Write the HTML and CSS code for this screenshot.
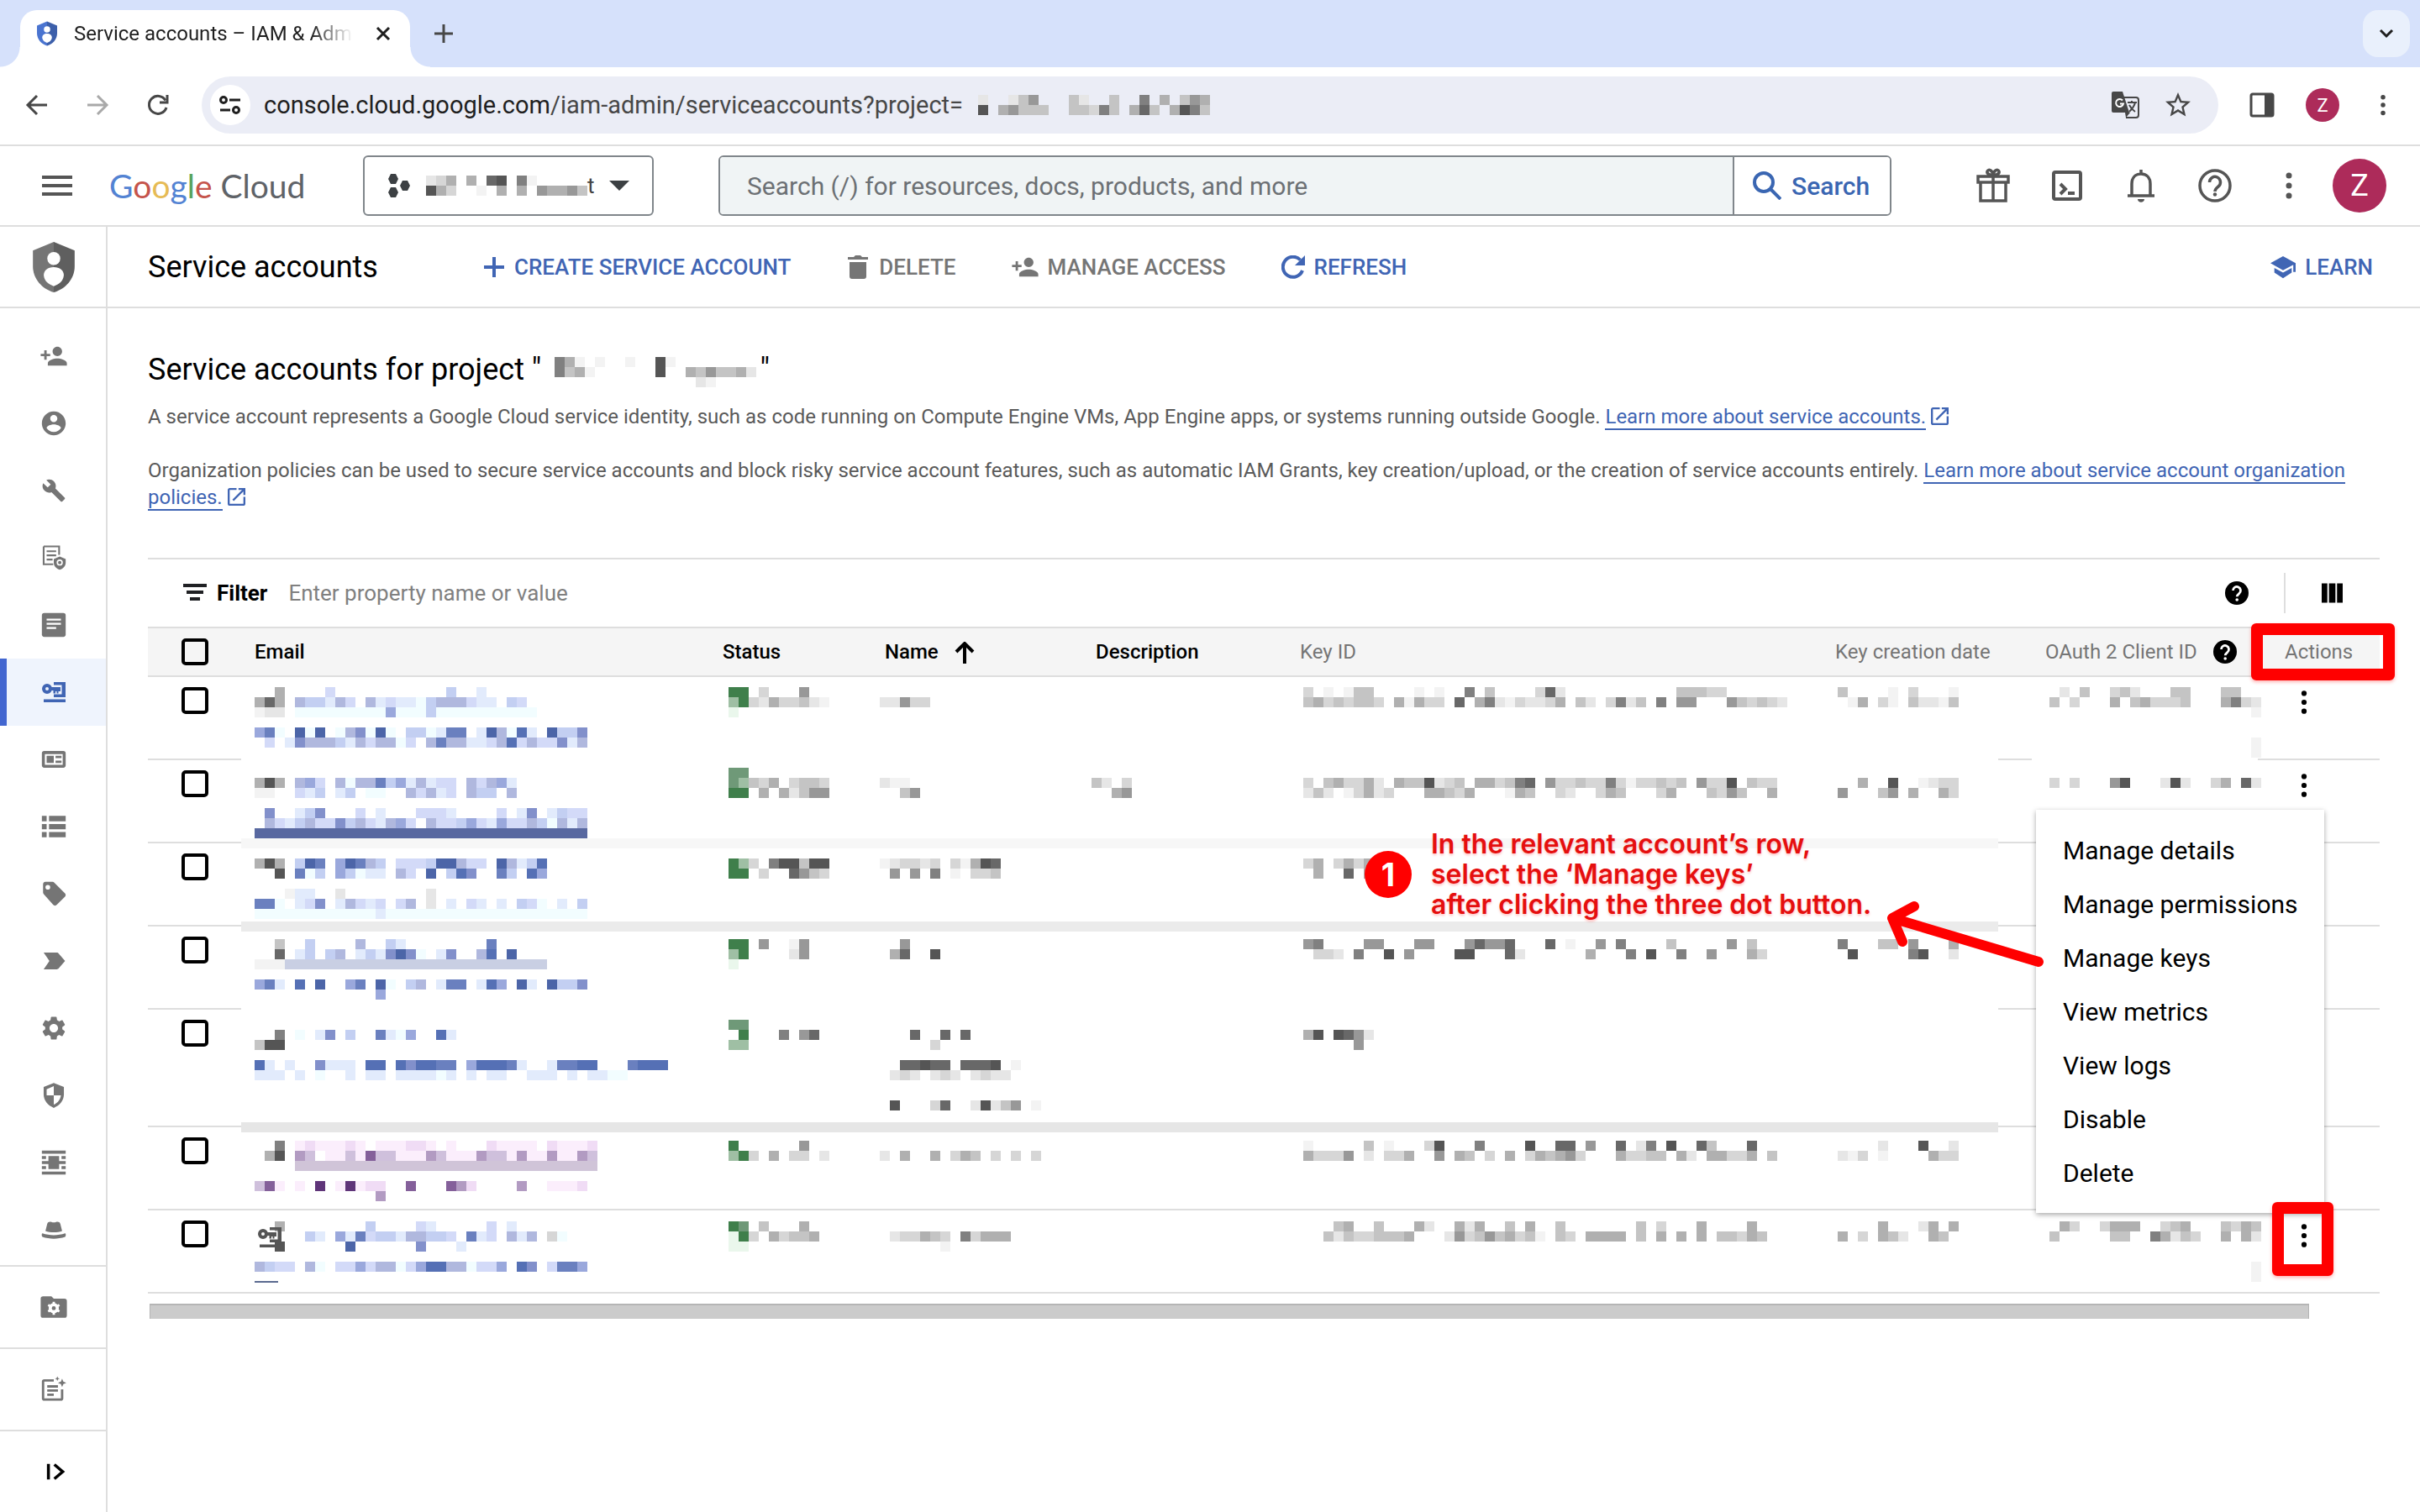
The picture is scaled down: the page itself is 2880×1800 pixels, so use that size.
FILE: index.html
```html
<!DOCTYPE html>
<html lang="en">
<head>
  <meta charset="utf-8">
  <title>Service accounts – IAM &amp; Admin</title>
  <link rel="stylesheet" href="styles.css">
</head>
<body>
  <svg class="sprite" aria-hidden="true">
    <symbol id="dots" viewBox="0 0 24 24"><circle cx="12" cy="4.500" r="2.200"/><circle cx="12" cy="12" r="2.200"/><circle cx="12" cy="19.500" r="2.200"/></symbol>
    <symbol id="person-add" viewBox="0 0 24 24"><path d="M15 12c2.210 0 4-1.790 4-4s-1.790-4-4-4-4 1.790-4 4 1.790 4 4 4zm-9-2V7H4v3H1v2h3v3h2v-3h3v-2H6zm9 4c-2.670 0-8 1.340-8 4v2h16v-2c0-2.660-5.330-4-8-4z"/></symbol>
    <symbol id="help" viewBox="0 0 28 28"><circle cx="14" cy="14" r="14"/><path d="M9.500 11a4.500 4.500 0 1 1 7.300 3.500c-1.800 1.400-2.600 2-2.600 3.800" fill="none" stroke="#fff" stroke-width="2.800"/><circle cx="14.200" cy="22" r="1.800" fill="#fff"/></symbol>
    <symbol id="open" viewBox="3 3 18 18"><path d="M19 19H5V5h7V3H5c-1.110 0-2 .9-2 2v14c0 1.100.890 2 2 2h14c1.100 0 2-.9 2-2v-7h-2v7zM14 3v2h3.590l-9.830 9.830 1.410 1.410L19 6.410V10h2V3h-7z"/></symbol>
    <symbol id="key-account" viewBox="0 0 28 24"><path d="M14 0h14v18H14v-3.500h9.500v-11H14z"/><circle cx="6" cy="8" r="4" fill="none" stroke="currentColor" stroke-width="4"/><path d="M9 6h13v5h-2.500v2.500h-2V11H16v2.500h-2.500V10H9zM2 20.500h26V24H2z"/></symbol>
    <symbol id="shield-user" viewBox="0 0 48 58"><path d="M24 0 0 10v18c0 14 10 26 24 30 14-4 24-16 24-30V10z"/><path d="M24 0v58c14-4 24-16 24-30V10z" fill="#000" opacity=".18"/><circle cx="24" cy="19" r="7.500" fill="#fff"/><path d="M24 29c-7 0-11.500 4-11.500 9 0 7 6 11 11.500 13 5.500-2 11.500-6 11.500-13 0-5-4.500-9-11.500-9z" fill="#fff"/></symbol>
  </svg>

  <div class="tab-strip">
    <div class="tab">
      <svg class="favicon"><use href="#shield-user"/></svg>
      <span class="tab-title">Service accounts – IAM &amp; Admin</span>
      <button class="plain" aria-label="Close tab"><svg width="20" height="20" viewBox="0 0 20 20"><path d="M3 3l14 14M17 3L3 17" stroke="#1f1f1f" stroke-width="3"/></svg></button>
    </div>
    <button class="plain new-tab" aria-label="New tab"><svg width="22" height="22" viewBox="0 0 22 22"><path d="M11 0v22M0 11h22" stroke="#474747" stroke-width="3"/></svg></button>
    <button class="plain tab-search" aria-label="Search tabs"><svg width="18" height="12" viewBox="0 0 18 12"><path d="M2 2l7 7 7-7" fill="none" stroke="#1f1f1f" stroke-width="3"/></svg></button>
  </div>

  <div class="toolbar">
    <div class="nav-buttons">
      <button class="plain" aria-label="Back"><svg width="28" height="28" viewBox="0 0 28 28" fill="none" stroke="#474747" stroke-width="3"><path d="M26 14H4M14 3L3 14l11 11"/></svg></button>
      <button class="plain" aria-label="Forward"><svg width="28" height="28" viewBox="0 0 28 28" fill="none" stroke="#a9a9a9" stroke-width="3"><path d="M2 14h22M14 3l11 11-11 11"/></svg></button>
      <button class="plain" aria-label="Reload"><svg width="28" height="28" viewBox="0 0 28 28" fill="none" stroke="#474747" stroke-width="3"><path d="M24 17a10.500 10.500 0 1 1-1-8.500"/><path d="M25 2v9h-9"/></svg></button>
    </div>
    <div class="address">
      <span class="site-info"><svg width="28" height="28" viewBox="0 0 28 28" fill="none" stroke="#1f1f1f" stroke-width="3"><circle cx="6" cy="8" r="3.500"/><path d="M13 8h13M2 20h12"/><circle cx="21" cy="20" r="3.500"/></svg></span>
      <span class="url">console.cloud.google.com<span>/iam-admin/serviceaccounts?project=</span></span>
      <svg class="px" data-px="2..246...42..4..7.5.465/9.56444..44374.584.5974"></svg>
      <svg class="translate" width="34" height="34" viewBox="0 0 34 34"><path d="M15 8h15a3 3 0 0 1 3 3v18a3 3 0 0 1-3 3H18" fill="none" stroke="#474747" stroke-width="2"/><path d="M3 1h11l8 25H3a2 2 0 0 1-2-2V3a2 2 0 0 1 2-2z" fill="#474747"/><path d="M17 26h6l-5 6z" fill="#474747"/><path d="M14 11.500a4.500 4.500 0 1 0 1 4h-4" fill="none" stroke="#fff" stroke-width="2"/><path d="M20 14h11M25 12v2M29 14c-1 5-4 8-7 11M22 17c2 4 4 6 7 8" fill="none" stroke="#474747" stroke-width="2"/></svg>
      <svg width="36" height="36" viewBox="0 0 24 24" fill="#474747"><path d="M22 9.240l-7.190-.620L12 2 9.190 8.630 2 9.240l5.460 4.730L5.820 21 12 17.270 18.180 21l-1.630-7.030L22 9.240zM12 15.400l-3.760 2.270 1-4.280-3.320-2.880 4.380-.380L12 6.100l1.710 4.040 4.380.380-3.320 2.880 1 4.280L12 15.400z"/></svg>
    </div>
    <div class="browser-actions">
      <svg width="30" height="30" viewBox="0 0 30 30"><rect x="2" y="2" width="26" height="26" rx="2" fill="none" stroke="#474747" stroke-width="3"/><path d="M18 1h9v28h-9z" fill="#474747"/></svg>
      <span class="avatar small">Z</span>
      <button class="plain" aria-label="Chrome menu"><svg width="30" height="30" fill="#474747"><use href="#dots"/></svg></button>
    </div>
  </div>

  <header class="console-bar">
    <button class="plain menu-btn" aria-label="Main menu"><svg width="36" height="24" viewBox="0 0 36 24" fill="#555"><path d="M0 0h36v4H0zM0 10h36v4H0zM0 20h36v4H0z"/></svg></button>
    <a class="logo" href="#"><span class="g-blue">G</span><span class="g-red">o</span><span class="g-yellow">o</span><span class="g-blue">g</span><span class="g-green">l</span><span class="g-red">e</span> Cloud</a>
    <button class="project">
      <svg width="28" height="28" viewBox="0 0 28 28" fill="#3c4043"><path d="M4 0h6l3 6-3 6H4L1 6zM4 16h6l3 6-3 6H4l-3-6zM18 8h6l3 6-3 6h-6l-3-6z"/></svg>
      <svg class="px" data-px="235.5.89.71/953..1.5.5.65564"></svg>
      <span class="project-tail">t</span>
      <svg width="24" height="12" viewBox="0 0 24 12" fill="#3c4043"><path d="M0 0h24L12 12z"/></svg>
    </button>
    <form class="search">
      <input type="text" aria-label="Search" placeholder="Search (/) for resources, docs, products, and more">
      <button type="button"><svg width="34" height="34" viewBox="0 0 34 34" fill="none" stroke="#3a66b2" stroke-width="4"><circle cx="13" cy="13" r="11"/><path d="M21 21l12 12"/></svg>Search</button>
    </form>
    <div class="console-icons">
      <button class="plain" aria-label="Free trial"><svg width="42" height="42" viewBox="0 0 42 42" fill="none" stroke="#555" stroke-width="3.500"><path d="M3 10h36v7H3zM6 17h30v22H6zM21 10v29M21 9c-4-1-8-2-7-5s6-2 7 4c1-6 6-7 7-4s-3 4-7 5"/></svg></button>
      <button class="plain" aria-label="Cloud Shell"><svg width="42" height="42" viewBox="0 0 42 42" fill="none" stroke="#555" stroke-width="4"><rect x="5" y="5" width="32" height="32" rx="2"/><path d="M13 19l6 6-6 6M22 30h8"/></svg></button>
      <button class="plain" aria-label="Notifications"><svg width="42" height="42" viewBox="0 0 42 42" fill="none" stroke="#555" stroke-width="3.500"><path d="M5 33h32M10 33V19c0-7 4-12 11-12s11 5 11 12v14M21 2v5"/><path d="M17 37h8c0 5-8 5-8 0z" fill="#555" stroke="none"/></svg></button>
      <button class="plain" aria-label="Help"><svg width="42" height="42" viewBox="0 0 42 42" fill="none" stroke="#555" stroke-width="3.500"><circle cx="21" cy="21" r="18"/><path d="M14.500 17a6.500 6.500 0 1 1 10.500 5c-2.500 2-4 3-4 6"/><circle cx="21" cy="31.500" r="2.200" fill="#555" stroke="none"/></svg></button>
      <button class="plain" aria-label="More"><svg width="42" height="42" viewBox="1 1 22 22" fill="#555"><use href="#dots" x="2" y="2" width="20" height="20"/></svg></button>
      <span class="avatar">Z</span>
    </div>
  </header>

  <div class="workspace">
    <nav class="rail">
      <a class="rail-head" href="#" aria-label="IAM"><svg width="50" height="60" fill="#757575"><use href="#shield-user"/></svg></a>
      <ul>
        <li><a href="#" aria-label="IAM"><svg><use href="#person-add"/></svg></a></li>
        <li><a href="#" aria-label="Identity"><svg viewBox="0 0 24 24"><path d="M12 2C6.480 2 2 6.480 2 12s4.480 10 10 10 10-4.480 10-10S17.520 2 12 2zm0 3c1.660 0 3 1.340 3 3s-1.340 3-3 3-3-1.340-3-3 1.340-3 3-3zm0 14.200c-2.500 0-4.710-1.280-6-3.220.030-1.990 4-3.080 6-3.080 1.990 0 5.970 1.090 6 3.080-1.290 1.940-3.500 3.220-6 3.220z"/></svg></a></li>
        <li><a href="#" aria-label="Troubleshooter"><svg viewBox="-2 -2 28 28"><path d="M22.700 19l-9.100-9.100c.9-2.300.4-5-1.500-6.900-2-2-5-2.400-7.400-1.300L9 6 6 9 1.600 4.700C.4 7.100.9 10.100 2.900 12.100c1.900 1.900 4.600 2.400 6.900 1.500l9.100 9.100c.4.4 1 .4 1.400 0l2.300-2.300c.5-.4.5-1.100.1-1.400z"/></svg></a></li>
        <li><a href="#" aria-label="Policy analyzer"><svg viewBox="0 0 24 24"><path d="M3.500 2.500h13v7M3.500 2.500v15h8M6 6.500h8M6 10h8M6 13.500h5" fill="none" stroke="currentColor" stroke-width="1.500"/><path d="M17 11l5 2v3c0 3-2 5-5 6-3-1-5-3-5-6v-3z"/><circle cx="17" cy="16" r="2" fill="none" stroke="#fff" stroke-width="1.200"/></svg></a></li>
        <li><a href="#" aria-label="Organization policies"><svg viewBox="0 0 24 24"><path d="M4 2h16a2 2 0 0 1 2 2v16a2 2 0 0 1-2 2H4a2 2 0 0 1-2-2V4a2 2 0 0 1 2-2z"/><path d="M6 7.500h12M6 11h12M6 14.500h8" stroke="#fff" stroke-width="1.600"/></svg></a></li>
        <li class="active"><a href="#" aria-label="Service accounts"><svg class="key"><use href="#key-account"/></svg></a></li>
        <li><a href="#" aria-label="Workload identity"><svg viewBox="0 0 24 24"><path d="M4 5h16a2 2 0 0 1 2 2v10a2 2 0 0 1-2 2H4a2 2 0 0 1-2-2V7a2 2 0 0 1 2-2zm.5 2.500v9h15v-9z" fill-rule="evenodd"/><path d="M6 9h6v6H6zM13.500 9h5v2h-5zM13.500 13h5v2h-5z"/></svg></a></li>
        <li><a href="#" aria-label="Federation"><svg viewBox="0 0 24 24"><path d="M2 3h4v4.500H2zM8 3h14v4.500H8zM2 9.800h4v4.500H2zM8 9.800h14v4.500H8zM2 16.500h4V21H2zM8 16.500h14V21H8z"/></svg></a></li>
        <li><a href="#" aria-label="Labels"><svg viewBox="0 0 24 24"><path d="M21.410 11.580l-9-9C12.050 2.220 11.550 2 11 2H5c-1.100 0-2 .9-2 2v7c0 .550.220 1.050.590 1.420l8 9c.360.360.860.580 1.410.580.550 0 1.050-.220 1.410-.590l7-7c.370-.360.590-.860.590-1.410 0-.550-.230-1.060-.590-1.420zM7 8.500a2 2 0 1 1 0-4 2 2 0 0 1 0 4z"/></svg></a></li>
        <li><a href="#" aria-label="Tags"><svg viewBox="0 0 24 24"><path d="M3.500 19h11c.670 0 1.270-.330 1.630-.840L21.500 12l-5.370-6.160c-.360-.510-.960-.840-1.630-.840h-11L8.340 12z"/></svg></a></li>
        <li><a href="#" aria-label="Settings"><svg viewBox="0 0 24 24"><path d="M19.140 12.940c.040-.3.060-.610.060-.940 0-.320-.020-.640-.070-.940l2.030-1.580c.180-.140.230-.410.120-.610l-1.920-3.320c-.120-.220-.370-.290-.590-.220l-2.390.960c-.5-.380-1.030-.7-1.620-.940l-.360-2.540c-.040-.240-.240-.410-.480-.410h-3.840c-.240 0-.430.170-.470.410l-.360 2.540c-.590.240-1.130.570-1.620.940l-2.390-.960c-.220-.080-.470 0-.590.220L2.740 8.870c-.120.210-.080.470.120.610l2.030 1.580c-.050.3-.090.630-.090.940s.020.640.070.940l-2.030 1.580c-.180.140-.230.410-.120.610l1.920 3.320c.120.220.370.290.590.220l2.390-.960c.5.380 1.030.7 1.620.940l.360 2.540c.050.240.240.410.480.410h3.840c.240 0 .440-.170.470-.410l.360-2.540c.590-.240 1.130-.560 1.620-.940l2.390.960c.220.080.470 0 .590-.220l1.920-3.320c.120-.220.070-.470-.120-.610l-2.010-1.580zM12 15.600c-1.980 0-3.600-1.620-3.600-3.600s1.620-3.600 3.600-3.600 3.600 1.620 3.600 3.600-1.620 3.600-3.600 3.600z"/></svg></a></li>
        <li><a href="#" aria-label="Privacy and security"><svg viewBox="0 0 24 24"><path d="M12 1.500L3.500 5v6c0 5.500 3.500 9.500 8.500 11.500 5-2 8.500-6 8.500-11.500V5z"/><path d="M6 6.800l6-2.500V12H6zM12 12h6c-.5 3.500-2.500 6.300-6 7.800z" fill="#fff"/></svg></a></li>
        <li><a href="#" aria-label="Identity-aware proxy"><svg viewBox="0 0 24 24"><path d="M2 2h20v2.500H2zM2 19.500h20V22H2zM7.500 6.500h9v11h-9zM2 6.500h3.500V9H2zM18.500 6.500H22V9h-3.500zM2 10.800h20v2.400H2zM2 15h3.500v2.500H2zM18.500 15H22v2.500h-3.500z"/></svg></a></li>
        <li><a href="#" aria-label="Roles"><svg viewBox="0 0 24 24"><path d="M5 13l1.500-6c.5-1.500 2-2 3.500-1.500s2.500.5 4 0 3 0 3.500 1.500L19 13c-4 1.500-10 1.500-14 0z"/><path d="M2.500 15c6 2 13 2 19 0 .8 0 .8 2.500 0 3-6 2-13 2-19 0-.8-.5-.8-3 0-3z"/></svg></a></li>
      </ul>
      <a class="rail-extra" href="#" aria-label="Manage resources"><svg viewBox="0 0 24 24"><path d="M10 3H3a2 2 0 0 0-2 2v14a2 2 0 0 0 2 2h18a2 2 0 0 0 2-2V7a2 2 0 0 0-2-2h-9z"/><circle cx="12" cy="13" r="3" fill="none" stroke="#fff" stroke-width="2.600"/><path d="M12 7.500v11M7.300 10.300l9.400 5.400M16.700 10.300l-9.400 5.400" stroke="#fff" stroke-width="2" stroke-dasharray="2.500 6 2.500"/></svg></a>
      <a class="rail-extra" href="#" aria-label="Release notes"><svg viewBox="0 0 24 24"><path d="M12 4.500H4a1 1 0 0 0-1 1v14a1 1 0 0 0 1 1h14a1 1 0 0 0 1-1V12M6.500 9.500h9M6.500 13h9M6.500 16.500H12" fill="none" stroke="currentColor" stroke-width="2"/><path d="M19 3l1 2.500 2.500 1-2.500 1-1 2.500-1-2.500-2.500-1 2.500-1zM15 1l.6 1.400 1.400.6-1.400.6L15 5l-.6-1.400L13 3l1.400-.6z"/></svg></a>
      <button class="rail-extra plain" aria-label="Expand menu"><svg viewBox="0 0 24 24"><path d="M7.500 5.500v13M12.500 6l7 6-7 6" fill="none" stroke="#000" stroke-width="2.500"/></svg></button>
    </nav>

    <main>
      <div class="action-bar">
        <h1>Service accounts</h1>
        <button class="plain action blue"><svg width="26" height="26" viewBox="0 0 26 26" stroke="currentColor" stroke-width="4"><path d="M13 1v24M1 13h24"/></svg>CREATE SERVICE ACCOUNT</button>
        <button class="plain action"><svg width="28" height="28" viewBox="-2 0 28 28"><path d="M0 2h7l2-2h6l2 2h7v3H0zM2 8h20v17a3 3 0 0 1-3 3H5a3 3 0 0 1-3-3z"/></svg>DELETE</button>
        <button class="plain action"><svg width="32" height="34" viewBox="1 0 32 34"><use href="#person-add" width="34" height="34"/></svg>MANAGE ACCESS</button>
        <button class="plain action blue"><svg width="28" height="28" viewBox="0 0 28 28"><path d="M25 18a12 12 0 1 1-2.500-12.500" fill="none" stroke="currentColor" stroke-width="4"/><path d="M28 0v12H16z"/></svg>REFRESH</button>
        <a class="action blue learn" href="#"><svg width="30" height="28" viewBox="0 0 32 28"><path d="M16 0L0 9l16 9 13-7v9h3V9z"/><path d="M5 15v6l11 7 11-7v-6l-11 6z"/></svg>LEARN</a>
      </div>

      <section class="content">
        <h2>Service accounts for project "<svg class="px" data-px=".751.1..1..91/.7451......9..5464452/...............21"></svg>"</h2>
        <p>A service account represents a Google Cloud service identity, such as code running on Compute Engine VMs, App Engine apps, or systems running outside Google. <a href="#">Learn more about service accounts.</a> <svg class="ext"><use href="#open"/></svg></p>
        <p>Organization policies can be used to secure service accounts and block risky service account features, such as automatic IAM Grants, key creation/upload, or the creation of service accounts entirely. <a href="#">Learn more about service account organization policies.</a> <svg class="ext"><use href="#open"/></svg></p>

        <div class="filter">
          <svg width="28" height="22" viewBox="0 0 28 22" fill="#202124"><path d="M0 0h28v4H0zM4 8h20v4H4zM8 16h12v4H8z"/></svg>
          <label for="filter">Filter</label>
          <input type="text" id="filter" placeholder="Enter property name or value">
          <button class="plain" aria-label="Filter help"><svg width="28" height="28"><use href="#help"/></svg></button>
          <button class="plain columns" aria-label="Columns"><svg width="26" height="24" viewBox="0 0 26 24"><path d="M0 0h7v24H0zM9 0h8v24H9zM19 0h7v24h-7z"/></svg></button>
        </div>

        <table>
          <thead>
            <tr>
              <th class="check"><input type="checkbox" aria-label="Select all"></th>
              <th class="email">Email</th>
              <th class="status">Status</th>
              <th class="name">Name <svg width="24" height="26" viewBox="0 0 24 26"><path d="M12 26V3M2 12L12 2l10 10" fill="none" stroke="#000" stroke-width="4"/></svg></th>
              <th class="desc">Description</th>
              <th class="key-id muted">Key ID</th>
              <th class="date muted">Key creation date</th>
              <th class="oauth muted">OAuth 2 Client ID <svg width="28" height="28"><use href="#help"/></svg></th>
              <th class="actions muted">Actions<span class="mark"></span></th>
            </tr>
          </thead>
          <tbody>
            <tr class="erased first">
              <td class="check"><input type="checkbox" aria-label="Select account 1"></td>
              <td class="email"><svg class="px" data-px="..5....c...........d..b/585.eddbec.ebcbbadeeecbb.dc/122.aaaaaaaaafaaadaaaaaaaaaa//fha.jaj.aegaja.ddabhh.bjeaib.jddg/.c.bgeeedbeceeac.eheebbceiceccgbe"></svg></td>
              <td class="status"><svg class="px" data-px="GG.3...6/IG32533421/K"></svg></td>
              <td class="name"><svg class="px" data-px="/22633"></svg></td>
              <td class="desc"></td>
              <td class="key-id"><svg class="px" data-px="3.1.144....1.1..7.4....382...........44433/45343443.51533.8.572132235.42.3724.7.66...643432"></svg></td>
              <td class="date"><svg class="px" data-px="4....1.3...1/.15.31.42214"></svg></td>
              <td class="oauth"><svg class="px" data-px=".2.4..342...44...44/4.3...5.453334...5732/....................1///....................1/....................1"></svg></td>
              <td class="actions"><button class="plain" aria-label="Actions"><svg width="34" height="34"><use href="#dots"/></svg></button></td>
            </tr>
            <tr class="erased smudge">
              <td class="check"><input type="checkbox" aria-label="Select account 2"></td>
              <td class="email"><svg class="px" data-px="/595.efc.eaeehdfbebcc.ecefb/11..cbd.bd.aa..ecebc.edd.e//.g..bdg...c.b...cccb....c.bg.bdcc/.ecbdeccgdecbefc.eccdfcbfccedaebe/kkkkkkkkkkkkkkkkkkkkkkkkkkkkkkkkk"></svg></td>
              <td class="status"><svg class="px" data-px="HH/HI435.3443/GG.5.52466"></svg></td>
              <td class="name"><svg class="px" data-px="/211/..46"></svg></td>
              <td class="desc"><svg class="px" data-px="/42.3/..56"></svg></td>
              <td class="key-id"><svg class="px" data-px="/3.453352.5449234.553478.63343373133434.6339.433/242.13523...55435...154..32..354...35...4364..5"></svg></td>
              <td class="date"><svg class="px" data-px="/..5..9..1233/6...46.5..53"></svg></td>
              <td class="oauth"><svg class="px" data-px="/3.3...69...292..35.82"></svg></td>
              <td class="actions"><button class="plain" aria-label="Actions"><svg width="34" height="34"><use href="#dots"/></svg></button></td>
            </tr>
            <tr class="erased smudge dark">
              <td class="check"><input type="checkbox" aria-label="Select account 3"></td>
              <td class="email"><svg class="px" data-px="/595.djh.fjhed.cccdjjecc.jebdi/..9.had.fdabb.ec.j.dig..hd.if//...1bb..2........2/hha.bcg.becbc.ce.2.b.cb.b.dca.b.d/aaaaaaaaaaaabaaaaaaaaaaaaaaaaaaaa"></svg></td>
              <td class="status"><svg class="px" data-px="/GI3.799499/GG.3..8643"></svg></td>
              <td class="name"><svg class="px" data-px="/123323.31598/.6.6.7.1.334"></svg></td>
              <td class="desc"></td>
              <td class="key-id"><svg class="px" data-px="/35.3535/.5..8.5"></svg></td>
              <td class="date"></td>
              <td class="oauth"></td>
              <td class="actions"></td>
            </tr>
            <tr class="erased">
              <td class="check"><input type="checkbox" aria-label="Select account 4"></td>
              <td class="email"><svg class="px" data-px="..4..d....e..db........h/..8.bd.de.bdbgjga.bg..ei.j/111wwwwwwwwwwwwwwwwwwwwwwwwww//fhb.i.j..fh.ja.de.bhh.bif.jb.jddg/............f"></svg></td>
              <td class="status"><svg class="px" data-px="GG.6..16/IG....26/K"></svg></td>
              <td class="name"><svg class="px" data-px="..6/.58..9"></svg></td>
              <td class="desc"></td>
              <td class="key-id"><svg class="px" data-px="67....66...66...68668...8.1..6.7....4.....6.4/.332.7..9.6....99...82......5...7.9..7..6...53"></svg></td>
              <td class="date"><svg class="px" data-px="7...44.6...5/.9.....79..2"></svg></td>
              <td class="oauth"></td>
              <td class="actions"></td>
            </tr>
            <tr class="erased smudge darker tall">
              <td class="check"><input type="checkbox" aria-label="Select account 5"></td>
              <td class="email"><svg class="px" data-px="/..7.a.bg.d..hbaf..ib/499//ib.b..gbbb.ii.igiihh.fiiihb..bhhii...hiii/bbb.b.a..b.bb.bbbbab.b.bb..bbb.b.bbaa"></svg></td>
              <td class="status"><svg class="px" data-px="HH/.G...7.68/II"></svg></td>
              <td class="name"><svg class="px" data-px="/...8..8.8/.....3//..88988.8889.1/.232.232.2322///.9...38..29246.1"></svg></td>
              <td class="desc"></td>
              <td class="key-id"><svg class="px" data-px="/59.9862/.....6"></svg></td>
              <td class="date"></td>
              <td class="oauth"></td>
              <td class="actions"></td>
            </tr>
            <tr>
              <td class="check"><input type="checkbox" aria-label="Select account 6"></td>
              <td class="email"><svg class="px" data-px="..7.pqpppqp.pppqqp.p...qpppp.qpppq/.59.sr.pprptrrpppsrpppsrrpsppsppsr/....vvvvvvvvvvvvvvvvvvvvvvvvvvvvvv//rtp.p.u.pupqq..t...tsq....s..pppq/............s"></svg></td>
              <td class="status"><svg class="px" data-px="G......6/IG3.5.33.2"></svg></td>
              <td class="name"><svg class="px" data-px="/2.5..5.354.3.3.3"></svg></td>
              <td class="desc"></td>
              <td class="key-id"><svg class="px" data-px="1.....4.1...39...7....9..88.6..8.27.9..84...8/53336.2.335..6.54.3.5.354563...53344.52.55335.4"></svg></td>
              <td class="date"><svg class="px" data-px="....2...9..2/213.1....533"></svg></td>
              <td class="oauth"></td>
              <td class="actions"></td>
            </tr>
            <tr>
              <td class="check"><input type="checkbox" aria-label="Select account 7"></td>
              <td class="email"><svg class="px" data-px="..5........d....cb.....c.b/.....db.fbhcddbeeddc.hbc.ebe.3a/..9......j......g...b//edcc.ea.ccfceeacfiieeaccf.ig.chhf"></svg><svg class="row-key"><use href="#key-account"/></svg><span class="link-end"></span></td>
              <td class="status"><svg class="px" data-px="GH.4...5/KG3.53445/KK"></svg></td>
              <td class="name"><svg class="px" data-px="/.233543.73555/......1"></svg></td>
              <td class="desc"></td>
              <td class="key-id"><svg class="px" data-px="...45..4...52..525..4.5..4.......4.3...5....5/..424334445...2634645341.43.5555.4.5.5.5.44354"></svg></td>
              <td class="date"><svg class="px" data-px="....5...25.5/5.3.542..54"></svg></td>
              <td class="oauth"><svg class="px" data-px=".53..3555..345...4354/4.....44..75243..5.52///....................1/....................1"></svg></td>
              <td class="actions">
                <button class="plain" aria-label="Actions"><svg width="34" height="34"><use href="#dots"/></svg></button>
                <span class="mark"></span>
                <div class="menu-wrap">
                  <div class="callout">
                    <span class="step">1</span>
                    <p>In the relevant account’s row,<br>select the ‘Manage keys’<br>after clicking the three dot button.</p>
                  </div>
                  <ul class="menu">
                    <li><button>Manage details</button></li>
                    <li><button>Manage permissions</button></li>
                    <li><button>Manage keys</button></li>
                    <li><button>View metrics</button></li>
                    <li><button>View logs</button></li>
                    <li><button>Disable</button></li>
                    <li><button>Delete</button></li>
                  </ul>
                  <svg class="arrow" viewBox="0 0 200 100"><path d="M186 78L12 26M38 12L12 26l12 28" fill="none" stroke="#f00" stroke-width="12" stroke-linecap="round" stroke-linejoin="round"/></svg>
                </div>
              </td>
            </tr>
          </tbody>
        </table>
        <div class="scrollbar"><div></div></div>
      </section>
    </main>
  </div>

  <script src="mosaic.js"></script>
</body>
</html>
```
FILE: styles.css
```css
* {
  box-sizing: border-box;
}

body {
  margin: 0;
  min-height: 100vh;
  display: flex;
  flex-direction: column;
  background: #fff;
  color: #000;
  font-family: Roboto, "Liberation Sans", sans-serif;
  font-size: 24px;
}

h1, h2, p, ul {
  margin: 0;
  padding: 0;
}

h1, h2 {
  font-weight: 400;
}

ul {
  list-style: none;
}

input, button {
  font-family: inherit;
}

.plain {
  display: flex;
  align-items: center;
  justify-content: center;
  border: none;
  background: none;
  padding: 0;
  cursor: pointer;
}

.sprite {
  position: absolute;
  width: 0;
  height: 0;
}

.px {
  display: block;
  flex: none;
}

/* browser chrome */

.tab-strip {
  display: flex;
  align-items: center;
  height: 80px;
  padding: 12px 12px 0 24px;
  background: #d6e1fb;
}

.tab {
  display: flex;
  align-items: center;
  position: relative;
  width: 464px;
  height: 68px;
  padding: 0 22px 12px 20px;
  border-radius: 20px 20px 0 0;
  background: #fff;
}

.tab::before,
.tab::after {
  content: "";
  position: absolute;
  bottom: 0;
  width: 24px;
  height: 24px;
}

.tab::before {
  left: -24px;
  background: radial-gradient(circle at 0 0, #d6e1fb 23px, #fff 24px);
}

.tab::after {
  right: -24px;
  background: radial-gradient(circle at 100% 0, #d6e1fb 23px, #fff 24px);
}

.favicon {
  width: 24px;
  height: 30px;
  fill: #4a74d0;
}

.tab-title {
  flex: 1;
  margin: 0 26px 0 20px;
  overflow: hidden;
  white-space: nowrap;
  color: #1f1f1f;
  -webkit-mask-image: linear-gradient(to right, #000 85%, transparent);
  mask-image: linear-gradient(to right, #000 85%, transparent);
}

.new-tab {
  width: 80px;
  height: 56px;
  margin-bottom: 12px;
}

.tab-search {
  width: 56px;
  height: 56px;
  margin: 0 0 12px auto;
  border-radius: 18px;
  background: #e9f0fc;
}

.toolbar {
  display: flex;
  align-items: center;
  height: 94px;
  padding: 0 14px 2px 30px;
  border-bottom: 2px solid #dedede;
}

.nav-buttons {
  display: flex;
  gap: 44px;
  width: 210px;
}

.address {
  flex: 1;
  display: flex;
  align-items: center;
  height: 68px;
  padding: 0 30px 0 10px;
  border-radius: 34px;
  background: #ebedf6;
}

.site-info {
  display: flex;
  align-items: center;
  justify-content: center;
  width: 48px;
  height: 48px;
  margin-right: 16px;
  border-radius: 50%;
  background: #fff;
}

.url {
  margin-right: 18px;
  font-size: 29px;
  color: #1f1f1f;
}

.url span {
  color: #474747;
}

.translate {
  margin: 0 28px 0 auto;
}

.browser-actions {
  display: flex;
  align-items: center;
  gap: 37px;
  padding-left: 37px;
  width: 226px;
}

.avatar {
  display: flex;
  align-items: center;
  justify-content: center;
  flex: none;
  width: 64px;
  height: 64px;
  border-radius: 50%;
  background: #ad2b5a;
  color: #fff;
  font-size: 36px;
}

.avatar.small {
  width: 40px;
  height: 40px;
  font-size: 22px;
}

/* console header */

.console-bar {
  display: flex;
  align-items: center;
  height: 96px;
  padding: 0 40px 0 50px;
  border-bottom: 2px solid #dedede;
}

.menu-btn {
  width: 36px;
  margin-right: 44px;
}

.logo {
  width: 302px;
  color: #5f6368;
  font-family: Lato, sans-serif;
  font-size: 39px;
  line-height: 48px;
  text-decoration: none;
  white-space: nowrap;
}

.g-blue { color: #5383d3; }
.g-red { color: #c5544b; }
.g-yellow { color: #e6bb55; }
.g-green { color: #58a55c; }

.project {
  display: flex;
  align-items: center;
  width: 346px;
  height: 72px;
  padding: 0 27px;
  border: 2px solid #80868b;
  border-radius: 6px;
  background: #fff;
  color: #444;
  font-size: 26px;
}

.project .px {
  margin: 0 0 0 18px;
}

.project-tail {
  margin: 0 auto 0 0;
}

.search {
  display: flex;
  flex: 1;
  height: 72px;
  margin: 0 100px 0 77px;
  border: 2px solid #80868b;
  border-radius: 6px;
  overflow: hidden;
}

.search input {
  flex: 1;
  min-width: 0;
  padding: 0 32px;
  border: none;
  background: #f0f4f5;
  font-size: 30px;
}

.search input::placeholder {
  color: #6c7074;
  opacity: 1;
}

.search button {
  display: flex;
  align-items: center;
  gap: 12px;
  width: 187px;
  padding: 0 22px;
  border: none;
  border-left: 2px solid #80868b;
  background: #fff;
  color: #3a66b2;
  font-size: 30px;
  font-weight: 500;
}

.console-icons {
  display: flex;
  align-items: center;
  gap: 46px;
}

.console-icons .avatar {
  margin-left: -15px;
}

/* left rail */

.workspace {
  flex: 1;
  display: flex;
}

.rail {
  display: flex;
  flex-direction: column;
  width: 128px;
  border-right: 2px solid #dedede;
  color: #757575;
}

.rail a,
.rail button {
  display: flex;
  align-items: center;
  justify-content: center;
  padding-left: 2px;
  color: inherit;
}

.rail svg {
  fill: currentColor;
}

.rail li svg,
.rail-extra svg {
  width: 34px;
  height: 34px;
}

.rail .rail-head {
  height: 97px;
  border-bottom: 2px solid #dedede;
}

.rail ul {
  padding: 17px 0 0;
  height: 1139px;
}

.rail li a {
  height: 80px;
}

.rail .active {
  background: #eff4fd;
  border-left: 8px solid #4266d0;
  color: #4065b4;
}

.rail .active a {
  padding: 0 6px 0 0;
}

.rail li svg.key {
  width: 28px;
  height: 24px;
}

.rail .rail-extra {
  height: 98px;
  border-top: 2px solid #dedede;
}

/* page */

main {
  flex: 1;
  min-width: 0;
}

.action-bar {
  display: flex;
  align-items: center;
  height: 97px;
  padding: 0 56px 0 48px;
  border-bottom: 2px solid #dedede;
}

h1 {
  width: 399px;
  font-size: 36px;
}

.action {
  display: flex;
  align-items: center;
  gap: 11px;
  margin-right: 66px;
  color: #757575;
  fill: currentColor;
  font-size: 26px;
  font-weight: 500;
  text-decoration: none;
  white-space: nowrap;
}

.blue {
  color: #4065b4;
}

.learn {
  margin: 0 0 0 auto;
}

.content {
  padding: 49px 48px 0;
}

h2 {
  display: flex;
  align-items: center;
  margin-bottom: 16px;
  font-size: 36px;
  line-height: 48px;
  white-space: pre;
}

h2 .px {
  margin: 6px 4px 0;
}

.content > p {
  margin-bottom: 32px;
  color: #5a5a5a;
  line-height: 32px;
}

.content > p a {
  color: #4065b4;
  text-decoration: none;
  border-bottom: 2px solid #4065b4;
}

.ext {
  width: 21px;
  height: 21px;
  vertical-align: -2px;
  fill: #4065b4;
}

.filter {
  display: flex;
  align-items: center;
  height: 82px;
  margin-top: 56px;
  padding: 0 44px 0 42px;
  border-top: 2px solid #dedede;
}

.filter label {
  margin: 0 25px 0 12px;
  font-size: 26px;
  font-weight: 700;
}

.filter input {
  flex: 1;
  padding: 0;
  border: none;
  font-size: 26px;
}

.filter input::placeholder {
  color: #808080;
  opacity: 1;
}

.filter .columns {
  width: 70px;
  height: 48px;
  margin-left: 42px;
  padding-left: 43px;
  border-left: 2px solid #dedede;
}

table {
  width: 100%;
  table-layout: fixed;
  border-spacing: 0;
}

th {
  height: 60px;
  padding: 0 0 0 16px;
  border-top: 2px solid #dedede;
  border-bottom: 2px solid #dedede;
  background: #f5f5f5;
  font-weight: 500;
  text-align: left;
  white-space: nowrap;
}

th.muted {
  color: #757575;
  font-weight: 400;
}

th svg {
  vertical-align: -6px;
  margin-left: 13px;
}

td {
  position: relative;
  height: 99px;
  padding: 12px 0 0;
  border-bottom: 2px solid #dedede;
  vertical-align: top;
}

.check { width: 111px; }
.email { width: 557px; }
.status { width: 193px; }
.name { width: 251px; }
.desc { width: 243px; }
.date { width: 250px; }
.oauth { width: 269px; }
.actions { width: 145px; }

th.check,
td.check {
  padding-left: 40px;
}

th.actions {
  position: relative;
  padding-left: 32px;
}

td.email { padding-left: 16px; }
td.status { padding-left: 23px; }
td.name { padding-left: 10px; }
td.desc { padding-left: 11px; }
td.key-id { padding-left: 20px; }
td.date { padding-left: 19px; }
td.oauth { padding-left: 21px; }
td.actions { padding: 13px 0 0 38px; }

.tall td {
  height: 140px;
}

.px {
  position: relative;
}

/* keeps the mosaics of all rows on one common 12px grid */
tr:nth-child(2) .px { top: -3px; }
tr:nth-child(3) .px { top: -6px; }
tr:nth-child(4) .px { top: 3px; }

/* rules hidden behind the redaction */
.erased .email,
.erased .status,
.erased .name,
.erased .desc,
.erased .key-id,
.erased .date,
.first .oauth {
  border-bottom-color: transparent;
}

.erased .date {
  background: linear-gradient(#dedede, #dedede) right bottom / 40px 2px no-repeat border-box;
}

.smudge .email::after,
.smudge .status::after,
.smudge .name::after,
.smudge .desc::after,
.smudge .key-id::after,
.smudge .date::after {
  content: "";
  position: absolute;
  left: 0;
  right: 0;
  bottom: -8px;
  height: 12px;
  background: #f7f7f7;
}

.smudge .date::after {
  right: 40px;
}

.dark td::after { background: #ebebeb !important; }
.darker td::after { background: #e6e6e6 !important; }

tr:nth-child(6) .px { top: 4px; }
tr:nth-child(7) .px { top: 1px; }

input[type="checkbox"] {
  display: block;
  appearance: none;
  width: 32px;
  height: 32px;
  margin: 0;
  border: 4px solid #000;
  border-radius: 5px;
}

.row-key {
  position: absolute;
  left: 20px;
  top: 20px;
  width: 28px;
  height: 24px;
  color: #555;
  fill: #555;
}

.link-end {
  display: block;
  width: 28px;
  height: 14px;
  border-bottom: 2px solid #5a6a90;
}

.scrollbar {
  padding: 12px 84px 0 2px;
}

.scrollbar div {
  height: 18px;
  border: 1px solid #b5b5b5;
  border-top-width: 2px;
  border-bottom: none;
  background: #cbcbcb;
}

/* actions menu and walkthrough marks */

.mark {
  position: absolute;
  border: 14px solid #f00;
  border-radius: 6px;
  box-shadow: 0 2px 4px rgba(255, 0, 0, .3);
}

th .mark {
  inset: -6px -18px -6px -8px;
}

td .mark {
  z-index: 1;
  left: 17px;
  top: -10px;
  width: 73px;
  height: 88px;
}

.menu-wrap {
  position: absolute;
  right: 66px;
  bottom: 94px;
}

.menu {
  position: relative;
  width: 343px;
  padding: 16px 0;
  background: #fff;
  box-shadow: 0 2px 6px rgba(0, 0, 0, .35);
}

.menu button {
  display: block;
  width: 100%;
  height: 64px;
  padding: 0 32px;
  border: none;
  background: none;
  font-size: 30px;
  text-align: left;
  white-space: nowrap;
}

.callout {
  position: absolute;
  right: 531px;
  top: 23px;
  display: flex;
  align-items: center;
  gap: 23px;
  width: 611px;
  color: #e50f0f;
  font-family: Inter, sans-serif;
  font-size: 32px;
  font-weight: 600;
  line-height: 36px;
  white-space: nowrap;
}

.callout p {
  text-shadow: 0 2px 3px rgba(255, 0, 0, .25);
}

.step {
  display: flex;
  align-items: center;
  justify-content: center;
  flex: none;
  width: 56px;
  height: 56px;
  border-radius: 50%;
  background: #f00;
  color: #fff;
  font-size: 38px;
  font-weight: 700;
}

.arrow {
  position: absolute;
  left: -183px;
  top: 103px;
  width: 200px;
  height: 100px;
}
```
FILE: mosaic.js
```js
// Each character of data-px is one 12px cell, "/" starts a new line, "." is empty.
const CELL = 12;
const COLORS = {
  1: '#f3f3f3', 2: '#e6e6e6', 3: '#d6d6d6', 4: '#c4c4c4', 5: '#b0b0b0',
  6: '#989898', 7: '#808080', 8: '#686868', 9: '#555555',
  a: '#f2fdff', b: '#e2ebfc', c: '#d3daf8', d: '#c3cff2', e: '#b0b8de',
  f: '#9aa8dc', g: '#8290cb', h: '#6a80bf', i: '#5570b5', j: '#4c65a8',
  k: '#5868a0', w: '#c9cfe3',
  G: '#3f7f4b', H: '#6f9978', I: '#9fbfa4', K: '#eaf7ec',
  p: '#fbeefc', q: '#f0dcf5', r: '#cfc0dc', s: '#b29bc2', t: '#84609a',
  u: '#5f3579', v: '#d0c4d8'
};

document.querySelectorAll('.px').forEach(function (svg) {
  const lines = svg.dataset.px.split('/');
  const cols = Math.max(...lines.map(line => line.length));
  svg.setAttribute('width', cols * CELL);
  svg.setAttribute('height', lines.length * CELL);
  svg.setAttribute('shape-rendering', 'crispEdges');

  lines.forEach(function (line, y) {
    [...line].forEach(function (ch, x) {
      if (!COLORS[ch]) return;
      const cell = document.createElementNS('http://www.w3.org/2000/svg', 'rect');
      cell.setAttribute('x', x * CELL);
      cell.setAttribute('y', y * CELL);
      cell.setAttribute('width', CELL);
      cell.setAttribute('height', CELL);
      cell.setAttribute('fill', COLORS[ch]);
      svg.appendChild(cell);
    });
  });
});
```
